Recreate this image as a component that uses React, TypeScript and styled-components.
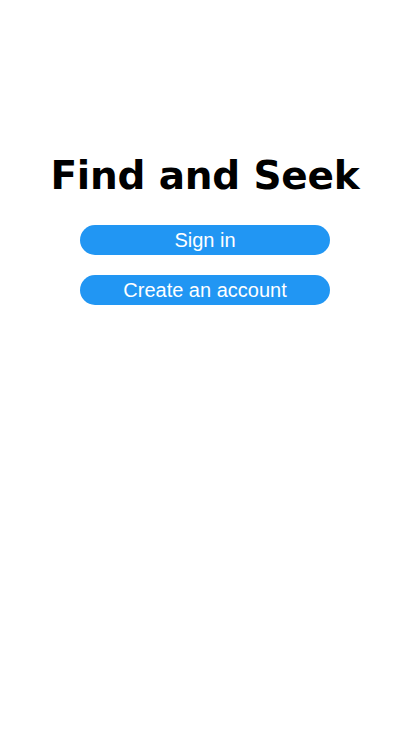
import React from "react";
import styled, { createGlobalStyle } from "styled-components";

const Global = createGlobalStyle`
  html, body { margin: 0; padding: 0; background: #fff; }
`;

const Page = styled.div`
  display: flex;
  flex-direction: column;
  align-items: center;
  padding-top: 151px;
  width: 410px;
`;

const Title = styled.h1`
  margin: 0 0 24px 0;
  font-family: "DejaVu Sans", Verdana, sans-serif;
  font-weight: bold;
  font-size: 39px;
  line-height: 50px;
  letter-spacing: -0.2px;
  color: #000;
`;

const Actions = styled.div`
  display: flex;
  flex-direction: column;
  gap: 20px;
`;

const Button = styled.button`
  width: 250px;
  height: 30px;
  border: none;
  border-radius: 15px;
  background: #2196f3;
  color: #fff;
  font-family: "Liberation Sans", Arial, sans-serif;
  font-size: 20px;
  padding: 0;
  cursor: pointer;
`;

export default function App() {
  return (
    <>
      <Global />
      <Page>
        <Title>Find and Seek</Title>
        <Actions>
          <Button>Sign in</Button>
          <Button>Create an account</Button>
        </Actions>
      </Page>
    </>
  );
}
